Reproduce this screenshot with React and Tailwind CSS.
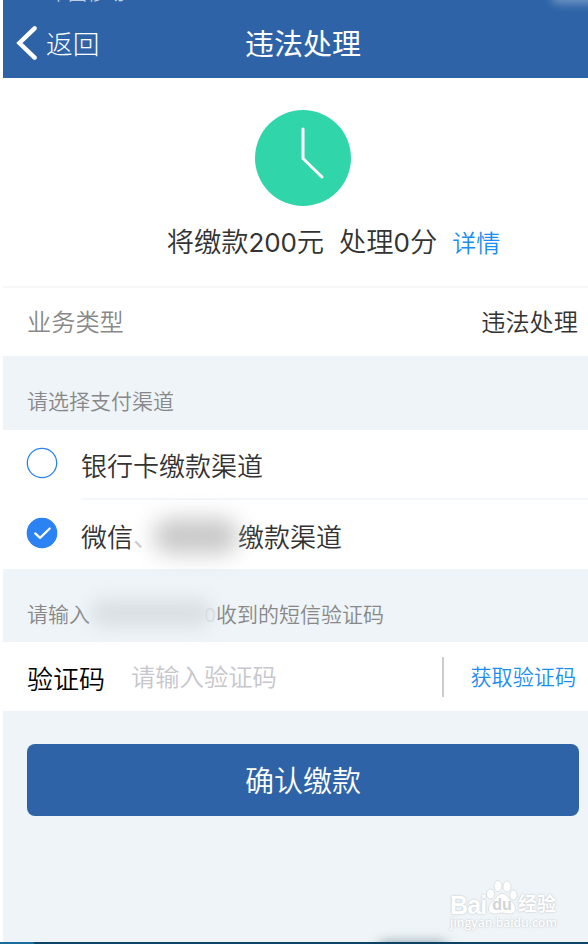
const CHANNELS = [
  { id: "bank", checked: false },
  { id: "wechat", checked: true },
];

function Radio({ checked }) {
  return (
    <svg viewBox="0 0 32 32" className="-mt-1 size-8 shrink-0" fill="none">
      <circle
        cx="16"
        cy="16"
        r="14.7"
        fill={checked ? "#2b83f3" : "#fff"}
        stroke="#2b83f3"
        strokeWidth="1.3"
      />
      {checked && (
        <path
          d="M9.2 16.4l4.9 4.5 9.6-9.4"
          stroke="#fff"
          strokeWidth="2.2"
          strokeLinecap="round"
          strokeLinejoin="round"
        />
      )}
    </svg>
  );
}

function Header() {
  return (
    <header className="relative h-[78px] shrink-0 overflow-hidden bg-[#2e64a7] text-white">
      <span className="absolute left-[46px] -top-[20px] text-[19px] leading-6 text-white/70">
        中国移动
      </span>
      <span className="absolute -top-3 left-[548px] h-4 w-16 rounded-full bg-white/30 blur-[4px]" />
      <div className="grid h-full grid-cols-[1fr_auto_1fr] items-center pl-[15px] pt-[7px]">
        <button className="-ml-[15px] flex items-center pl-[12px]">
          <svg viewBox="0 0 22 36" className="h-9 w-[22px]" fill="none">
            <path
              d="M19.6 3.3L4.4 18l15.2 14.7"
              stroke="#fff"
              strokeWidth="4.4"
              strokeLinecap="round"
              strokeLinejoin="miter"
            />
          </svg>
          <span className="ml-[9px] text-[26.7px] leading-9 font-light">返回</span>
        </button>
        <h1 className="-mt-[2px] text-[29px] leading-9 font-normal">违法处理</h1>
      </div>
    </header>
  );
}

function Summary() {
  return (
    <section className="flex h-[210px] shrink-0 flex-col items-center border-b-2 border-[#f5f7f9] pl-[15px] pt-8">
      <svg viewBox="0 0 96 96" className="size-24" fill="none">
        <circle cx="48" cy="48" r="48" fill="#30d5a9" />
        <path
          d="M48 19v29.5L67 67"
          stroke="#fff"
          strokeWidth="3"
          strokeLinecap="round"
          strokeLinejoin="round"
        />
      </svg>
      <div className="ml-[61px] mt-[14px] flex items-center text-[27.3px] leading-10 text-[#333]">
        <span>
          将缴款
          <span className="font-['Inter'] text-[26px] font-normal tracking-[-0.2px]">200</span>元
        </span>
        <span className="ml-[15px]">
          处理<span className="font-['Inter'] text-[26px] font-normal">0</span>分
        </span>
        <a className="ml-[15px] text-[24px] text-[#1b8ef2]">详情</a>
      </div>
    </section>
  );
}

function SectionTitle({ children }) {
  return (
    <div className="flex shrink-0 items-center bg-[#eef4f8] pl-6 pt-[14px] text-[21px] leading-7 text-[#888]">
      {children}
    </div>
  );
}

function Watermark() {
  return (
    <div className="absolute bottom-[11px] right-[32px] flex w-[106px] flex-col text-white [text-shadow:0_0_2px_#b3b8bc]">
      <div className="flex items-end leading-6">
        <span className="mb-[-2px] w-[36px] font-['Liberation_Sans'] text-[25px] font-bold tracking-[-0.8px]">
          Bai
        </span>
        <span className="relative h-9 w-8 shrink-0">
          <svg viewBox="0 0 32 36" className="size-full" fill="#fff" stroke="#d3d8db" strokeWidth="0.8">
            <ellipse cx="4.5" cy="15" rx="4" ry="5" />
            <ellipse cx="12" cy="7" rx="4" ry="5.5" />
            <ellipse cx="21" cy="7.5" rx="4" ry="5.5" />
            <ellipse cx="27.5" cy="16" rx="3.7" ry="5" />
            <path d="M16 14.5c5 0 6.500 5 9.500 8 6 5 5 12.500-2 12.500-3 0-4-1-7.500-1s-4.500 1-7.500 1c-7 0-8-7.500-2-12.500 4-3 4.500-8 9.500-8z" />
          </svg>
          <span className="absolute inset-x-0 top-[18px] text-center font-['Liberation_Sans'] text-[16px] leading-4 font-bold text-[#d0d5d8] [text-shadow:none]">
            du
          </span>
        </span>
        <span className="text-[19px] font-bold whitespace-nowrap">经验</span>
      </div>
      <span className="font-['Open_Sans'] text-[12px] leading-4 font-semibold tracking-[0.05px] whitespace-nowrap">
        jingyan.baidu.com
      </span>
    </div>
  );
}

export default function App() {
  return (
    <div className="h-[944px] w-[588px] overflow-hidden bg-white pl-[3px] font-['Noto_Sans_CJK_SC',sans-serif] font-[350]">
      <div className="relative flex h-[942px] flex-col bg-white">
        <Header />
        <Summary />

        <div className="flex h-[68px] shrink-0 items-center justify-between pb-px pl-6 pr-[10px] text-[24.2px]">
          <span className="text-[#888]">业务类型</span>
          <span className="text-[#333]">违法处理</span>
        </div>

        <div className="flex h-[74px] shrink-0 bg-[#eef4f8]">
          <SectionTitle>请选择支付渠道</SectionTitle>
        </div>

        <div className="h-[139px] shrink-0 pl-[23px]">
          {CHANNELS.map(({ id, checked }) => (
            <div key={id} className="flex h-[70px] items-center">
              <Radio checked={checked} />
              <div
                className={`ml-[23px] flex h-full flex-1 items-center text-[26px] text-[#333] ${
                  checked ? "" : "border-b-2 border-[#f4f7f9] pt-px"
                }`}
              >
                {checked ? (
                  <>
                    <span>微信</span>
                    <span className="relative h-10 w-[105px] text-[#ccc]">
                      、
                      <span className="absolute left-[20px] top-[3px] h-9 w-[86px] rounded-full bg-[#bbb] opacity-80 blur-[11px]" />
                    </span>
                    <span>缴款渠道</span>
                  </>
                ) : (
                  "银行卡缴款渠道"
                )}
              </div>
            </div>
          ))}
        </div>

        <div className="flex h-[73px] shrink-0 bg-[#eef4f8]">
          <SectionTitle>
            <span>请输入</span>
            <span className="relative h-7 w-[126px] text-right text-[#d6dbde]">
              <span className="absolute left-0 top-0 h-7 w-[122px] rounded-full bg-[#ccd1d4] opacity-60 blur-[9px]" />
              <span className="relative font-['Inter'] text-[19px]">0</span>
            </span>
            <span>收到的短信验证码</span>
          </SectionTitle>
        </div>

        <div className="flex h-[69px] shrink-0 items-center pl-6 pr-[12px]">
          <label className="pt-[2px] text-[26px] text-black">验证码</label>
          <input
            className="ml-[26px] -mt-px w-[311px] bg-transparent text-[24.3px] outline-none placeholder:text-[#c6c6cc]"
            placeholder="请输入验证码"
          />
          <span className="h-10 w-[1.5px] bg-[#ccc]" />
          <button className="ml-auto text-[21.1px] text-[#1b8ef2]">获取验证码</button>
        </div>

        <div className="relative flex-1 overflow-hidden bg-[#eef4f8] pl-6 pr-[9px] pt-[32.5px]">
          <button className="h-[72px] w-full rounded-lg bg-[#2e64a7] text-[29px] text-white">
            确认缴款
          </button>
          <span className="absolute -bottom-[16px] left-[375px] h-4 w-[70px] rounded-full bg-[#8d9ba5] blur-[6px]" />
          <Watermark />
        </div>
      </div>
      <div className="-ml-[3px] flex h-[2px] bg-[#0d4364]">
        <span className="w-[34px] bg-[#1b6a9c]" />
      </div>
    </div>
  );
}
